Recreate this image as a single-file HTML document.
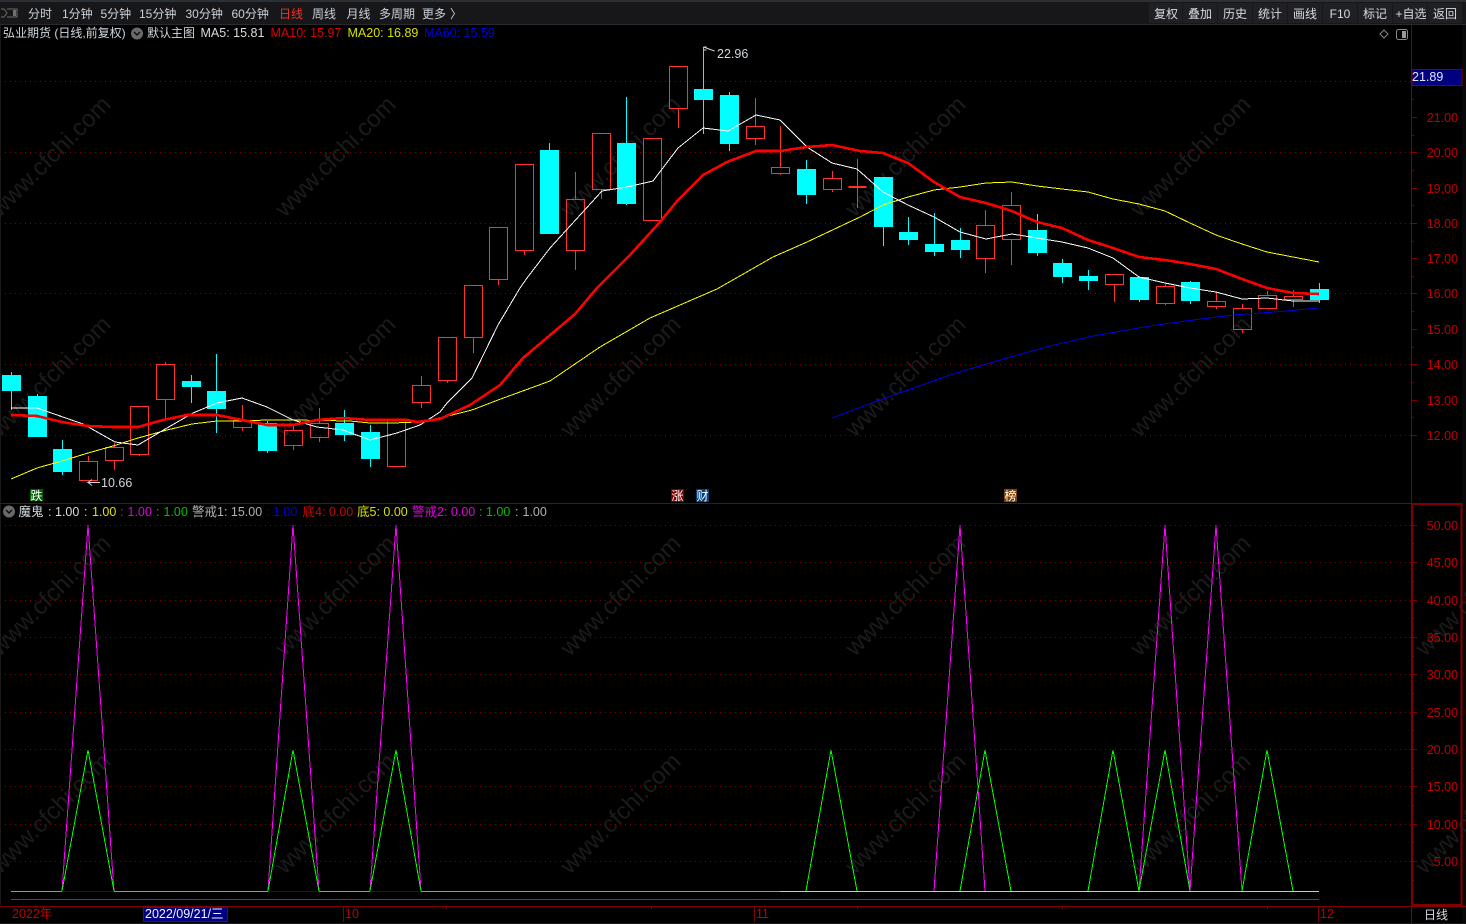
<!DOCTYPE html>
<html><head><meta charset="utf-8"><style>
html,body{margin:0;padding:0;background:#000;width:1466px;height:924px;overflow:hidden}
svg{display:block}
text{font-family:"Liberation Sans","Noto Sans CJK SC",sans-serif;font-size:12.5px}
.m{font-size:12px;fill:#c9d1d9}
.a{fill:#c00000;text-anchor:end}
.w{font-size:24px;fill:#1b1b1b;text-anchor:middle}
.b{font-size:12px;fill:#d5dbe0;text-anchor:middle}
</style></head><body>
<svg width="1466" height="924" viewBox="0 0 1466 924" xmlns="http://www.w3.org/2000/svg">
<rect width="1466" height="924" fill="#000"/>
<rect x="1462" y="25" width="4" height="899" fill="#080808"/>
<!-- watermarks -->
<g class="wm" transform="translate(3 4)">
<text class="w" transform="translate(53 158) rotate(-45)">www.cfchi.com</text><text class="w" transform="translate(338 158) rotate(-45)">www.cfchi.com</text><text class="w" transform="translate(623 158) rotate(-45)">www.cfchi.com</text><text class="w" transform="translate(908 158) rotate(-45)">www.cfchi.com</text><text class="w" transform="translate(1193 158) rotate(-45)">www.cfchi.com</text>
<text class="w" transform="translate(53 378) rotate(-45)">www.cfchi.com</text><text class="w" transform="translate(338 378) rotate(-45)">www.cfchi.com</text><text class="w" transform="translate(623 378) rotate(-45)">www.cfchi.com</text><text class="w" transform="translate(908 378) rotate(-45)">www.cfchi.com</text><text class="w" transform="translate(1193 378) rotate(-45)">www.cfchi.com</text>
<text class="w" transform="translate(53 597) rotate(-45)">www.cfchi.com</text><text class="w" transform="translate(338 597) rotate(-45)">www.cfchi.com</text><text class="w" transform="translate(623 597) rotate(-45)">www.cfchi.com</text><text class="w" transform="translate(908 597) rotate(-45)">www.cfchi.com</text><text class="w" transform="translate(1193 597) rotate(-45)">www.cfchi.com</text><text class="w" transform="translate(1478 597) rotate(-45)">www.cfchi.com</text>
<text class="w" transform="translate(53 815) rotate(-45)">www.cfchi.com</text><text class="w" transform="translate(338 815) rotate(-45)">www.cfchi.com</text><text class="w" transform="translate(623 815) rotate(-45)">www.cfchi.com</text><text class="w" transform="translate(908 815) rotate(-45)">www.cfchi.com</text><text class="w" transform="translate(1193 815) rotate(-45)">www.cfchi.com</text><text class="w" transform="translate(1478 815) rotate(-45)">www.cfchi.com</text>
</g>
<!-- top bar -->
<rect x="0" y="0" width="1466" height="24" fill="#17171a"/>
<rect x="0" y="0" width="1466" height="2" fill="#2b2f36"/>
<rect x="0" y="24" width="1466" height="1" fill="#2a2a2e"/>
<g fill="#202024">
<rect x="1149" y="3" width="33" height="20"/><rect x="1183" y="3" width="34" height="20"/><rect x="1218" y="3" width="34" height="20"/><rect x="1253" y="3" width="34" height="20"/><rect x="1288" y="3" width="34" height="20"/><rect x="1323" y="3" width="34" height="20"/><rect x="1358" y="3" width="34" height="20"/><rect x="1393" y="3" width="34" height="20"/><rect x="1428" y="3" width="34" height="20"/>
</g>
<path d="M1 9h3l3 4-3 4H1M7 9h10v8H7" fill="none" stroke="#6c6c6c" stroke-width="1"/>
<rect x="13" y="10" width="3" height="6" fill="#707070"/>
<g class="mt">
<text class="m" x="28" y="18">分时</text><text class="m" x="62" y="18">1分钟</text><text class="m" x="100.500" y="18">5分钟</text><text class="m" x="139" y="18">15分钟</text><text class="m" x="185.500" y="18">30分钟</text><text class="m" x="231.500" y="18">60分钟</text>
<text class="m" x="279" y="18" style="fill:#f03030">日线</text><text class="m" x="312" y="18">周线</text><text class="m" x="346.500" y="18">月线</text><text class="m" x="379" y="18">多周期</text><text class="m" x="422" y="18">更多</text><text class="m" x="450" y="18">〉</text>
<text class="b" x="1166" y="18">复权</text><text class="b" x="1200" y="18">叠加</text><text class="b" x="1235" y="18">历史</text><text class="b" x="1270" y="18">统计</text><text class="b" x="1305" y="18">画线</text><text class="b" x="1340" y="18">F10</text><text class="b" x="1375" y="18">标记</text><text class="b" x="1411" y="18">+自选</text><text class="b" x="1445" y="18">返回</text>
</g>
<!-- grid -->
<path d="M0 81.500H1411M0 152.500H1411M0 223.500H1411M0 293.500H1411M0 364.500H1411M0 435.500H1411M0 525.500H1411M0 562.500H1411M0 600.500H1411M0 637.500H1411M0 674.500H1411M0 712.500H1411M0 749.500H1411M0 786.500H1411M0 824.500H1411M0 861.500H1411" stroke="#8a0000" stroke-width="1" stroke-dasharray="1 4" shape-rendering="crispEdges"/>
<!-- frame -->
<rect x="0" y="25" width="1" height="880" fill="#1a1a1a"/>
<g shape-rendering="crispEdges" fill="none" stroke="#800000">
<path d="M1411.500 25V503M0 503.500H1462"/>
<path d="M0 906.500H1466M1411.500 906V923M343.500 907V922M754.500 907V922M1318.500 907V922M446.500 906V909M651.500 906V909M857.500 906V909M1062.500 906V909M1267.500 906V909" />
<path d="M1412 81.500h5M1412 117.500h5M1412 152.500h5M1412 188.500h5M1412 223.500h5M1412 258.500h5M1412 293.500h5M1412 329.500h5M1412 364.500h5M1412 400.500h5M1412 435.500h5M1412 99.500h2M1412 135.500h2M1412 170.500h2M1412 205.500h2M1412 241.500h2M1412 276.500h2M1412 311.500h2M1412 347.500h2M1412 382.500h2M1412 417.500h2"/>
<path d="M1412 525.500h5M1412 562.500h5M1412 600.500h5M1412 637.500h5M1412 674.500h5M1412 712.500h5M1412 749.500h5M1412 786.500h5M1412 824.500h5M1412 861.500h5M1412 543.500h2M1412 581.500h2M1412 618.500h2M1412 656.500h2M1412 693.500h2M1412 730.500h2M1412 768.500h2M1412 805.500h2M1412 842.500h2M1412 880.500h2"/>
<rect x="1412" y="504" width="49.500" height="401" stroke-width="2"/>
</g>
<!-- axis labels -->
<g>
<text class="a" x="1458" y="122">21.00</text><text class="a" x="1458" y="157">20.00</text><text class="a" x="1458" y="193">19.00</text><text class="a" x="1458" y="228">18.00</text><text class="a" x="1458" y="263">17.00</text><text class="a" x="1458" y="298">16.00</text><text class="a" x="1458" y="334">15.00</text><text class="a" x="1458" y="369">14.00</text><text class="a" x="1458" y="405">13.00</text><text class="a" x="1458" y="440">12.00</text>
<text class="a" x="1458" y="530">50.00</text><text class="a" x="1458" y="567">45.00</text><text class="a" x="1458" y="605">40.00</text><text class="a" x="1458" y="642">35.00</text><text class="a" x="1458" y="679">30.00</text><text class="a" x="1458" y="717">25.00</text><text class="a" x="1458" y="754">20.00</text><text class="a" x="1458" y="791">15.00</text><text class="a" x="1458" y="829">10.00</text><text class="a" x="1458" y="866">5.00</text>
</g>
<rect x="1412" y="69.500" width="50" height="16" fill="#000080" stroke="#800000" shape-rendering="crispEdges"/>
<text x="1412" y="81" style="fill:#dfe6f5">21.89</text>
<!-- legend -->
<text x="3" y="37" style="fill:#cfd6dc;font-size:12px">弘业期货 (日线,前复权)</text>
<circle cx="137" cy="33.500" r="6" fill="#6a6a6a"/><path d="M134 32l3 3 3-3" fill="none" stroke="#111" stroke-width="1.500"/>
<text x="147" y="37" style="fill:#cfd6dc;font-size:12px">默认主图</text>
<text x="200.500" y="37" style="fill:#d8dee4">MA5: 15.81</text>
<text x="270.500" y="37" style="fill:#e00000">MA10: 15.97</text>
<text x="347.500" y="37" style="fill:#d8e000">MA20: 16.89</text>
<text x="424" y="37" style="fill:#0000e0">MA60: 15.59</text>
<path d="M1384 30l4 4-4 4-4-4z" fill="none" stroke="#888"/>
<rect x="1396.500" y="29.500" width="11" height="10" rx="2" fill="none" stroke="#888"/><rect x="1402" y="31" width="4" height="7" fill="#999"/>
<!-- candles: cyan -->
<path fill="none" stroke="#00ffff" shape-rendering="crispEdges" d="M11.500 372V410M37.500 394V437M62.500 440V475M191.500 375V403M216.500 354V433M267.500 421V453M344.500 410V441M370.500 425V467M549.500 143V234M626.500 97V205M703.500 47V134M729.500 92V151M806.500 160V204M883.500 177V246M908.500 217V245M934.500 213V256M960.500 228V258M1037.500 214V256M1062.500 259V283M1088.500 270V290M1139.500 277V302M1190.500 281V304M1319.500 283V303"/>
<path fill="#00ffff" shape-rendering="crispEdges" d="M2 375h19v16h-19zM28 396h19v41h-19zM53 449h19v23h-19zM182 381h19v6h-19zM207 391h19v18h-19zM258 423h19v28h-19zM335 423h19v12h-19zM361 432h19v27h-19zM540 150h19v84h-19zM617 143h19v61h-19zM694 89h19v11h-19zM720 95h19v49h-19zM797 169h19v26h-19zM874 177h19v50h-19zM899 232h19v8h-19zM925 244h19v8h-19zM951 240h19v10h-19zM1028 230h19v23h-19zM1053 263h19v14h-19zM1079 276h19v5h-19zM1130 277h19v23h-19zM1181 282h19v19h-19zM1310 289h19v11h-19z"/>
<!-- candles: red -->
<path fill="none" stroke="#ff3232" shape-rendering="crispEdges" d="
M79.500 461.500h18v19h-18zM88.500 456V461
M105.500 447.500h18v13h-18zM114.500 443V447M114.500 460V470
M130.500 406.500h18v48h-18zM139.500 455V456
M156.500 364.500h18v35h-18zM165.500 362V364M165.500 400V420
M233.500 420.500h18v7h-18zM242.500 405V420M242.500 428V431
M284.500 430.500h18v15h-18zM293.500 425V430M293.500 446V450
M310.500 423.500h18v14h-18zM319.500 408V423M319.500 438V442
M387.500 420.500h18v46h-18z
M412.500 385.500h18v17h-18zM421.500 376V385M421.500 403V408
M438.500 337.500h18v43h-18zM447.500 381V383
M464.500 285.500h18v52h-18zM473.500 337V353
M489.500 227.500h18v52h-18zM498.500 279V285
M515.500 164.500h18v86h-18zM524.500 251V255
M566.500 199.500h18v51h-18zM575.500 172V199M575.500 251V270
M592.500 133.500h18v56h-18zM601.500 190V199
M643.500 138.500h18v82h-18z
M669.500 66.500h18v42h-18zM678.500 109V128
M746.500 126.500h18v12h-18zM755.500 98V126M755.500 139V145
M771.500 167.500h18v6h-18zM780.500 126V167M780.500 174V175
M823.500 178.500h18v11h-18zM832.500 171V178M832.500 190V192
M857.500 159V208M848.500 186.500h18M848.500 187.500h18
M976.500 225.500h18v33h-18zM985.500 210V225M985.500 258V273
M1002.500 205.500h18v34h-18zM1011.500 192V205M1011.500 240V265
M1105.500 274.500h18v10h-18zM1114.500 285V302
M1156.500 286.500h18v17h-18zM1165.500 284V286M1165.500 304V305
M1207.500 301.500h18v5h-18zM1216.500 292V301M1216.500 307V309
M1233.500 308.500h18v21h-18zM1242.500 304V308M1242.500 330V333
M1258.500 295.500h18v13h-18zM1267.500 291V295
M1284.500 296.500h18v3h-18zM1293.500 290V296M1293.500 300V307"/>
<!-- MA lines -->
<g fill="none" shape-rendering="crispEdges">
<polyline stroke="#0000e0" points="832,418 880,400 950,375 1000,360 1050,346 1093,336 1150,326 1193,320 1233,315 1275,312 1319,308"/>
<polyline stroke="#ffff00" points="11,479 37,468 62,461 88,453 113,446 138,438 167,430 192,424 217,421 242,421 267,420 293,420 350,421 370,423 393,423 417,422 440,418 472,410 498,400 550,381 600,347 650,318 717,289 773,257 807,242 860,217 883,205 908,197 934,190 960,187 986,183 1012,182 1037,186 1062,189 1088,192 1113,199 1139,204 1165,211 1190,223 1216,235 1242,244 1267,252 1293,257 1319,262"/>
<polyline stroke="#ffffff" points="11,408 37,408 83,424 115,442 138,445 167,428 193,413 217,403 242,398 267,407 293,420 317,427 343,430 370,440 397,433 420,425 440,412 447,403 472,378 498,325 520,288 527,278 550,248 602,191 627,187 653,181 678,148 703,128 728,131 756,115 780,120 807,147 832,163 857,169 883,192 908,205 934,217 960,232 986,239 1012,234 1037,238 1062,242 1088,248 1113,258 1139,277 1165,283 1190,288 1216,292 1242,299 1267,298 1293,301 1319,301"/>
<polyline stroke="#ff0000" stroke-width="2.600" points="11,415 37,416 62,422 88,426 113,427 138,427 163,420 187,415 217,415 242,420 267,425 293,425 317,420 343,418 370,420 407,420 417,422 440,419 470,405 500,385 523,358 575,314 597,288 630,255 660,222 678,200 703,175 727,162 756,151 780,151 807,147 832,145 860,151 883,153 908,163 934,182 960,197 986,203 1012,211 1037,222 1062,228 1088,240 1113,248 1139,257 1165,260 1190,264 1216,269 1242,279 1267,288 1293,293 1319,294"/>
</g>
<!-- high / low -->
<path d="M703.500 47h3M703.500 50h3M703.500 47l11 4M100 482.500H88l4-3M88 482.500l4 3" fill="none" stroke="#cfd6dc"/>
<text x="717" y="58" style="fill:#cfd6dc">22.96</text>
<text x="101" y="487" style="fill:#cfd6dc">10.66</text>
<!-- markers -->
<rect x="30" y="489" width="13" height="12" fill="#006000"/><text x="30.500" y="500" style="font-size:12px;fill:#fff">跌</text>
<rect x="671" y="489" width="13" height="13" fill="#800000"/><text x="671.500" y="500" style="font-size:12px;fill:#fff">涨</text>
<rect x="696" y="489" width="13" height="13" fill="#004080"/><text x="696.500" y="500" style="font-size:12px;fill:#fff">财</text>
<rect x="1004" y="489" width="13" height="13" fill="#804000"/><text x="1004.500" y="500" style="font-size:12px;fill:#fff">榜</text>
<!-- lower legend -->
<circle cx="9" cy="511.500" r="6" fill="#6a6a6a"/><path d="M6 510l3 3 3-3" fill="none" stroke="#111" stroke-width="1.500"/>
<g>
<text x="18.500" y="516" style="fill:#d5dbe0">魔鬼</text><text x="48" y="516" style="fill:#d5dbe0">:</text><text x="55" y="516" style="fill:#d5dbe0">1.00</text>
<text x="84" y="516" style="fill:#e0e000">:</text><text x="92" y="516" style="fill:#e0e000">1.00</text>
<text x="120" y="516" style="fill:#e000e0">:</text><text x="127.500" y="516" style="fill:#e000e0">1.00</text>
<text x="156" y="516" style="fill:#00c000">:</text><text x="163.500" y="516" style="fill:#00c000">1.00</text>
<text x="192" y="516" style="fill:#b0b0b0">警戒1: 15.00</text>
<text x="266" y="516" style="fill:#0000e0">:</text><text x="273" y="516" style="fill:#0000e0">1.00</text>
<text x="302.500" y="516" style="fill:#d00000">底4: 0.00</text>
<text x="357" y="516" style="fill:#d8e000">底5: 0.00</text>
<text x="412" y="516" style="fill:#e000e0">警戒2: 0.00</text>
<text x="479" y="516" style="fill:#00c000">:</text><text x="486" y="516" style="fill:#00c000">1.00</text>
<text x="515" y="516" style="fill:#b0b0b0">:</text><text x="522.500" y="516" style="fill:#b0b0b0">1.00</text>
</g>
<!-- lower chart -->
<g fill="none" shape-rendering="crispEdges">
<path stroke="#ff0000" d="M11 899.500H1319"/>
<path stroke="#00ff00" d="M11 891.500H780"/>
<path stroke="#c8c8c8" d="M780 891.500H1319"/>
<path stroke="#0000e0" d="M62 891.500H114M268 891.500H319M370 891.500H421"/>
<polyline stroke="#ff00ff" points="62,891 88,525 114,891"/><polyline stroke="#ff00ff" points="268,891 293,525 319,891"/><polyline stroke="#ff00ff" points="370,891 396,525 421,891"/><polyline stroke="#ff00ff" points="934,891 960,525 985,891"/><polyline stroke="#ff00ff" points="1139,891 1165,525 1190,891"/><polyline stroke="#ff00ff" points="1190,891 1216,525 1242,891"/>
<polyline stroke="#00ff00" points="62,891 88,750 114,891"/><polyline stroke="#00ff00" points="268,891 293,750 319,891"/><polyline stroke="#00ff00" points="370,891 396,750 421,891"/><polyline stroke="#00ff00" points="806,891 831,750 857,891"/><polyline stroke="#00ff00" points="960,891 985,750 1011,891"/><polyline stroke="#00ff00" points="1088,891 1113,750 1139,891"/><polyline stroke="#00ff00" points="1139,891 1165,750 1190,891"/><polyline stroke="#00ff00" points="1242,891 1267,750 1293,891"/>
</g>
<!-- time axis -->
<text x="12" y="918" style="fill:#c00000">2022年</text>
<rect x="143.500" y="907.500" width="84" height="14" fill="#000080" stroke="#800000" shape-rendering="crispEdges"/>
<text x="145" y="918" style="fill:#f0f4ff">2022/09/21/三</text>
<text x="345" y="918" style="fill:#c00000">10</text><text x="756" y="918" style="fill:#c00000">11</text><text x="1320" y="918" style="fill:#c00000">12</text>
<text x="1424" y="919" style="fill:#d5dbe0;font-size:12px">日线</text>
<rect x="0" y="923" width="1466" height="1" fill="#1a1a1a"/>
</svg>
</body></html>
